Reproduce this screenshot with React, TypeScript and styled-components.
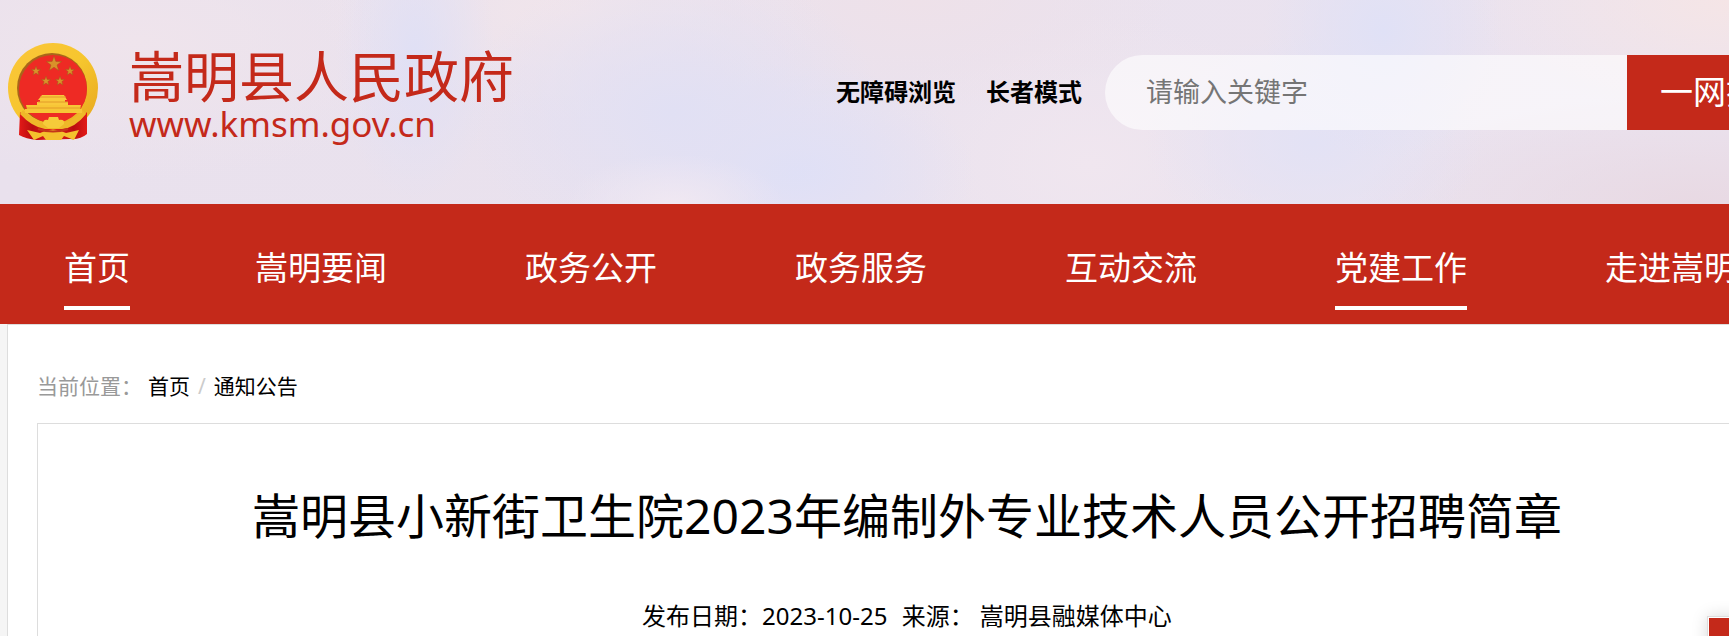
import React from "react";
import styled, { createGlobalStyle } from "styled-components";

const RED = "#c4291a";

const GlobalStyle = createGlobalStyle`
  * { box-sizing: border-box; }
  body {
    margin: 0;
    background: #f5f5f5;
    color: #000;
    font-family: "Noto Sans", "Noto Sans CJK SC", sans-serif;
    overflow: hidden;
  }
  a { color: inherit; text-decoration: none; }
`;

const Page = styled.div`
  min-height: 100vh;
  display: flex;
  flex-direction: column;
  overflow: hidden;
  white-space: nowrap;
`;

const Header = styled.header`
  height: 204px;
  background:
    radial-gradient(ellipse 110px 50px at 39% 100%, #f0e8f2 0%, transparent 100%),
    radial-gradient(ellipse 80px 150px at 24% 25%, #e0e0f5 0%, transparent 100%),
    radial-gradient(ellipse 210px 150px at 39% 55%, #e1e0f4 0%, transparent 100%),
    radial-gradient(ellipse 180px 110px at 46% 85%, #dfe0f7 0%, transparent 100%),
    radial-gradient(ellipse 120px 130px at 80% 15%, #e0e1f6 0%, transparent 100%),
    radial-gradient(ellipse 170px 110px at 76% 70%, #e3e2f5 0%, transparent 100%),
    radial-gradient(ellipse 260px 110px at 33% 5%, #f1e5eb 0%, transparent 100%),
    radial-gradient(ellipse 260px 110px at 53% 0%, #eee1e9 0%, transparent 100%),
    radial-gradient(ellipse 220px 150px at 63% 80%, #f0e6ef 0%, transparent 100%),
    radial-gradient(ellipse 260px 120px at 100% 0%, #f5e5e6 0%, transparent 100%),
    radial-gradient(ellipse 340px 110px at 98% 100%, #e8d9e3 0%, transparent 100%),
    radial-gradient(ellipse 320px 140px at 8% 20%, #efe4ec 0%, transparent 100%),
    linear-gradient(90deg, #e9e1ed, #ebe3ef);
`;

const Wrap = styled.div`
  min-width: 1798px;
  margin-left: 8px;
`;

const HeaderRow = styled(Wrap)`
  height: 100%;
  display: flex;
  align-items: flex-start;
  padding-top: 42px;
`;

const Brand = styled.a`
  display: flex;
  align-items: flex-start;
  width: 828px;
  color: ${RED};
`;

const Emblem = styled.svg`
  width: 91px;
  height: 100px;
  flex: none;
  margin-right: 30px;
`;

const BrandText = styled.span`
  display: flex;
  flex-direction: column;
`;

const SiteName = styled.span`
  font-size: 55px;
  line-height: 68px;
`;

const SiteUrl = styled.span`
  font-size: 35px;
  line-height: 28px;
`;

const Tools = styled.div`
  display: flex;
  align-items: center;
  height: 75px;
  margin-top: 13px;
`;

const ToolLink = styled.a`
  font-size: 24px;
  line-height: 36px;
  padding-bottom: 2px;
  font-weight: 700;
  margin-right: 30px;
  &:last-of-type { margin-right: 23px; }
`;

const Search = styled.form`
  display: flex;
  height: 75px;
`;

const SearchInput = styled.input`
  width: 522px;
  height: 75px;
  border: 0;
  outline: 0;
  padding: 0 42px 2px 41px;
  border-radius: 38px 0 0 38px;
  background: rgba(255, 255, 255, 0.6);
  font: inherit;
  font-size: 27px;
  &::placeholder { color: #757575; opacity: 1; }
`;

const SearchButton = styled.button`
  border: 0;
  height: 75px;
  padding: 0 33px 5px;
  border-radius: 0 38px 38px 0;
  background: ${RED};
  color: #fff;
  font: inherit;
  font-size: 33px;
`;

const Nav = styled.nav`
  background: ${RED};
`;

const NavList = styled(Wrap).attrs({ as: "ul" })`
  display: flex;
  margin-top: 0;
  margin-bottom: 0;
  padding: 0;
  list-style: none;
`;

const NavItem = styled.li<{ $short?: boolean }>`
  flex: none;
  width: ${(p) => (p.$short ? 178 : 270)}px;
  height: 120px;
  display: flex;
  justify-content: center;
`;

const NavLink = styled.a<{ $active?: boolean }>`
  height: 106px;
  padding-top: 40px;
  border-bottom: 4px solid ${(p) => (p.$active ? "#fff" : "transparent")};
  color: #fff;
  font-size: 33px;
  line-height: 48px;
`;

const Content = styled.main`
  flex: 1;
  display: flex;
  flex-direction: column;
  min-width: 1798px;
  margin-left: 7px;
  padding: 41px 29px 0;
  border: 1px solid #ddd;
  border-bottom: 0;
  background: #fff;
`;

const Breadcrumb = styled.nav`
  display: flex;
  font-size: 21px;
  line-height: 40px;
  margin-bottom: 17px;
`;

const CrumbLabel = styled.span`
  color: #999;
  margin-right: 6px;
`;

const CrumbSlash = styled.span`
  color: #ccc;
  margin: 0 8px;
`;

const Article = styled.article`
  flex: 1;
  min-width: 1740px;
  border: 1px solid #ddd;
  border-bottom: 0;
  padding-top: 56px;
  text-align: center;
`;

const Title = styled.h1`
  margin: 0 0 30px;
  font-size: 48px;
  line-height: 72px;
  font-weight: 400;
`;

const Meta = styled.p`
  margin: 0;
  font-size: 24px;
  line-height: 68px;
  white-space: pre;
`;

const MetaDate = styled.span`
  margin-right: 8px;
`;

const SideBar = styled.aside`
  position: fixed;
  right: -100px;
  top: 616px;
  width: 122px;
  height: 300px;
  padding: 1px;
  border: 1px solid #ddd;
  background: #fff;
  box-shadow: 0 0 15px rgba(0, 0, 0, 0.15);
`;

const SideBlock = styled.div`
  height: 100%;
  background: ${RED};
`;

const starPoints = (cx: number, cy: number, r: number) =>
  Array.from({ length: 10 }, (_, i) => {
    const a = -Math.PI / 2 + (i * Math.PI) / 5;
    const d = i % 2 ? r * 0.4 : r;
    return `${cx + d * Math.cos(a)},${cy + d * Math.sin(a)}`;
  }).join(" ");

const stars: [number, number, number][] = [
  [46, 22, 8],
  [28, 29, 5],
  [62, 29, 5],
  [38, 39, 5],
  [52, 39, 5],
];

const NationalEmblem = () => (
  <Emblem viewBox="0 0 91 100" aria-hidden="true">
    <defs>
      <linearGradient id="gold" x1="0" y1="0" x2="1" y2="1">
        <stop offset="0" stopColor="#fbc63a" />
        <stop offset="0.5" stopColor="#f6c62e" />
        <stop offset="1" stopColor="#e6a41c" />
      </linearGradient>
      <linearGradient id="drape" x1="0" y1="0" x2="1" y2="0">
        <stop offset="0" stopColor="#e31a17" />
        <stop offset="0.2" stopColor="#b90d10" />
        <stop offset="0.5" stopColor="#e6211c" />
        <stop offset="0.8" stopColor="#b90d10" />
        <stop offset="1" stopColor="#e31a17" />
      </linearGradient>
    </defs>
    <circle cx="45" cy="46" r="45" fill="url(#gold)" />
    <circle cx="44" cy="46" r="35" fill="#a9651a" />
    <circle cx="45" cy="47" r="34" fill="#ee2a24" />
    <path d="M12 70 Q22 84 37 85 L54 85 Q70 83 79 70 L79 92 Q72 98 62 97 L29 98 Q18 97 11 93Z" fill="url(#drape)" />
    <path d="M15 68 Q27 79 37 81 L54 81 Q65 79 74 68 L78 72 Q67 86 54 87 L37 87 Q24 85 12 72Z" fill="#efb829" />
    {stars.map(([x, y, r]) => (
      <polygon key={`${x}-${y}`} points={starPoints(x, y, r)} fill="#d9912a" stroke="#a5561b" strokeWidth="0.500" />
    ))}
    <path d="M34 53h22l3 5h-2v2h3v3H29v-3h3v-2h-2z" fill="#f9c93c" />
    <path d="M18 63h55l-1 4h2v4H17v-4h2z" fill="#f7c636" />
    <path d="M32 55h26M30 60h30M19 66h54" stroke="#e39a28" strokeWidth="1" />
    <path d="M35 82q0-5 5-4l1-3h9l1 3q6-1 5 4l-5 4H40z" fill="#f6cb3a" />
    <path d="M19 88l13 3q13-7 26 0l13-3-5 10-10-4-3 4H38l-3-4-9 4z" fill="#f4c12d" />
    <path d="M30 87q15 5 30 0" stroke="#c43719" strokeWidth="2" fill="none" />
  </Emblem>
);

const navItems = [
  { label: "首页", short: true, active: true },
  { label: "嵩明要闻" },
  { label: "政务公开" },
  { label: "政务服务" },
  { label: "互动交流" },
  { label: "党建工作", active: true },
  { label: "走进嵩明" },
];

export default function App() {
  return (
    <>
      <GlobalStyle />
      <Page>
        <Header>
          <HeaderRow>
            <Brand href="#">
              <NationalEmblem />
              <BrandText>
                <SiteName>嵩明县人民政府</SiteName>
                <SiteUrl>www.kmsm.gov.cn</SiteUrl>
              </BrandText>
            </Brand>
            <Tools>
              <ToolLink href="#">无障碍浏览</ToolLink>
              <ToolLink href="#">长者模式</ToolLink>
              <Search>
                <SearchInput type="text" placeholder="请输入关键字" aria-label="请输入关键字" />
                <SearchButton type="button">一网搜</SearchButton>
              </Search>
            </Tools>
          </HeaderRow>
        </Header>
        <Nav>
          <NavList>
            {navItems.map((n) => (
              <NavItem key={n.label} $short={n.short}>
                <NavLink href="#" $active={n.active}>
                  {n.label}
                </NavLink>
              </NavItem>
            ))}
          </NavList>
        </Nav>
        <Content>
          <Breadcrumb>
            <CrumbLabel>当前位置：</CrumbLabel>
            <a href="#">首页</a>
            <CrumbSlash>/</CrumbSlash>
            <a href="#">通知公告</a>
          </Breadcrumb>
          <Article>
            <Title>嵩明县小新街卫生院2023年编制外专业技术人员公开招聘简章</Title>
            <Meta>
              <MetaDate>发布日期：2023-10-25</MetaDate>
              {" 来源： 嵩明县融媒体中心"}
            </Meta>
          </Article>
        </Content>
        <SideBar>
          <SideBlock />
        </SideBar>
      </Page>
    </>
  );
}
